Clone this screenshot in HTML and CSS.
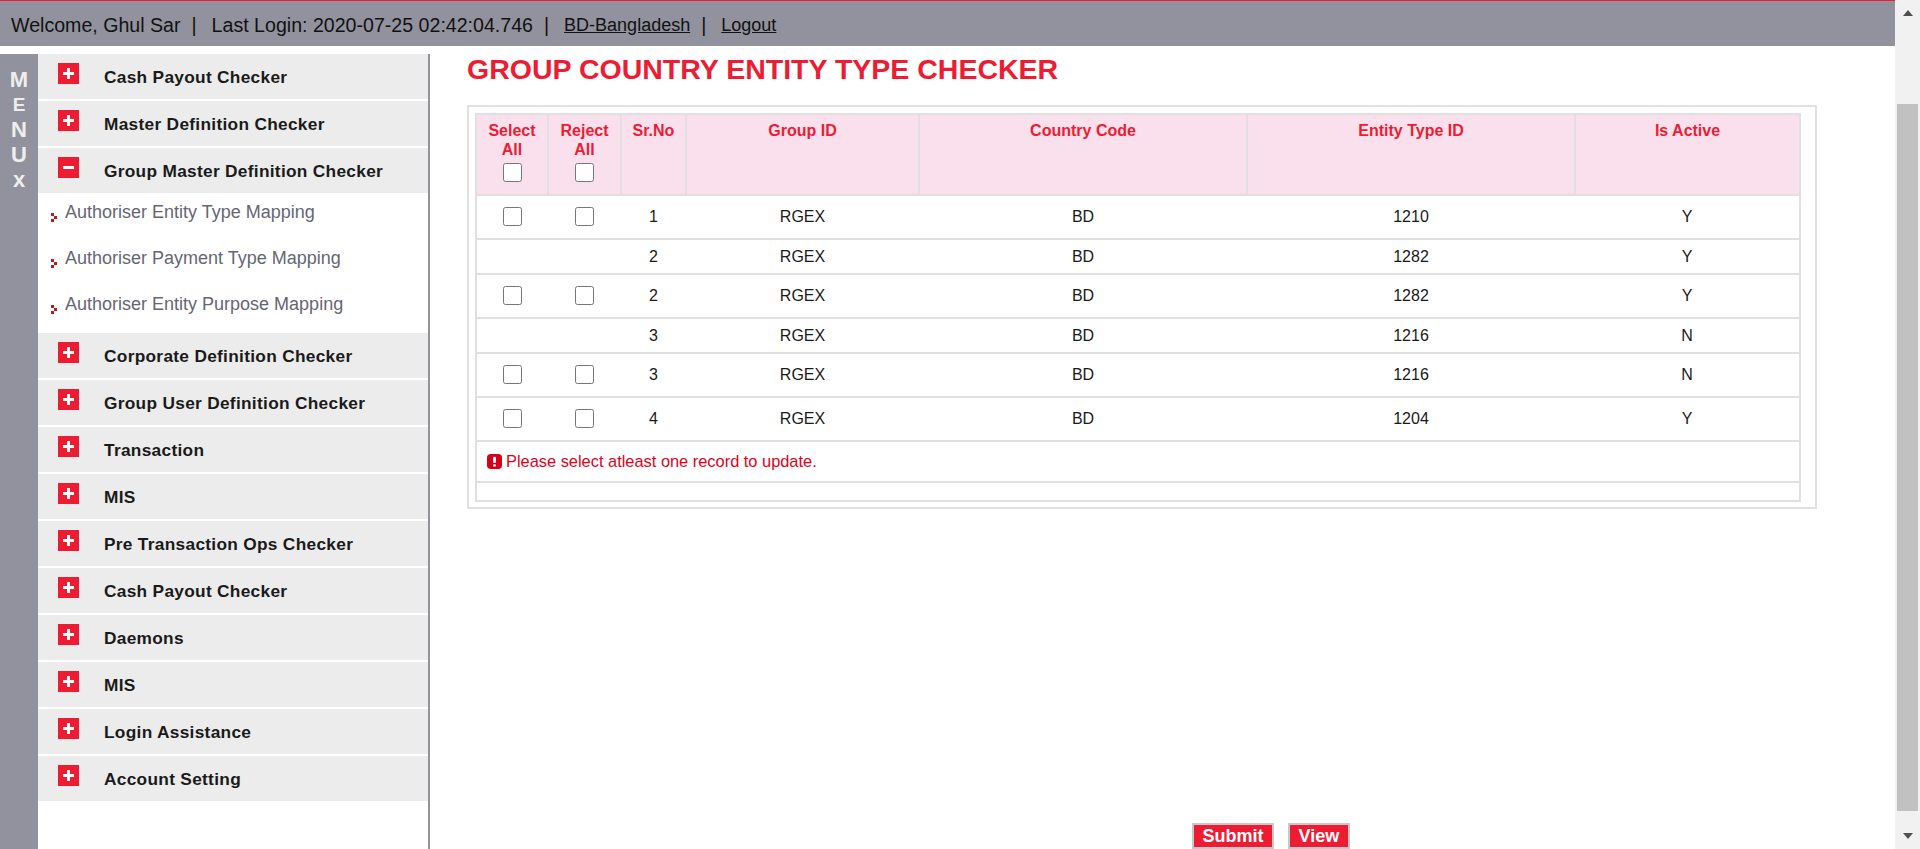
FILE: index.html
```html
<!DOCTYPE html>
<html lang="en">
<head>
    <meta charset="UTF-8">
    <meta name="viewport" content="width=device-width, initial-scale=1.0">
    <title>Group Country Entity Type Checker</title>
    <link rel="stylesheet" href="styles.css">
</head>
<body>
    <div class="page">
        <div class="page-main">
            <header class="topbar">
                <span>Welcome, Ghul Sar</span>
                <span class="sep">|</span>
                <span>Last Login: 2020-07-25 02:42:04.746</span>
                <span class="sep">|</span>
                <a href="#">BD-Bangladesh</a>
                <span class="sep">|</span>
                <a href="#">Logout</a>
            </header>

            <div class="layout">
                <aside class="sidebar">
                    <div class="menu-strip">
                        <span>M</span>
                        <span class="small">E</span>
                        <span>N</span>
                        <span>U</span>
                        <span>x</span>
                    </div>
                    <ul class="menu">
                        <li class="menu-item"><span class="toggle"></span>Cash Payout Checker</li>
                        <li class="menu-item"><span class="toggle"></span>Master Definition Checker</li>
                        <li class="menu-item"><span class="toggle minus"></span>Group Master Definition Checker</li>
                        <li class="submenu">
                            <a href="#"><svg class="bullet" viewBox="0 0 6 9"><path d="M0 0h3v3H0zM3 3h3v3H3zM0 6h3v3H0z" fill="#c3161c"/></svg>Authoriser Entity Type Mapping</a>
                            <a href="#"><svg class="bullet" viewBox="0 0 6 9"><path d="M0 0h3v3H0zM3 3h3v3H3zM0 6h3v3H0z" fill="#c3161c"/></svg>Authoriser Payment Type Mapping</a>
                            <a href="#"><svg class="bullet" viewBox="0 0 6 9"><path d="M0 0h3v3H0zM3 3h3v3H3zM0 6h3v3H0z" fill="#c3161c"/></svg>Authoriser Entity Purpose Mapping</a>
                        </li>
                        <li class="menu-item"><span class="toggle"></span>Corporate Definition Checker</li>
                        <li class="menu-item"><span class="toggle"></span>Group User Definition Checker</li>
                        <li class="menu-item"><span class="toggle"></span>Transaction</li>
                        <li class="menu-item"><span class="toggle"></span>MIS</li>
                        <li class="menu-item"><span class="toggle"></span>Pre Transaction Ops Checker</li>
                        <li class="menu-item"><span class="toggle"></span>Cash Payout Checker</li>
                        <li class="menu-item"><span class="toggle"></span>Daemons</li>
                        <li class="menu-item"><span class="toggle"></span>MIS</li>
                        <li class="menu-item"><span class="toggle"></span>Login Assistance</li>
                        <li class="menu-item"><span class="toggle"></span>Account Setting</li>
                    </ul>
                </aside>

                <main class="content">
                    <h1>GROUP COUNTRY ENTITY TYPE CHECKER</h1>
                    <div class="table-box">
                        <table class="grid">
                            <thead>
                                <tr>
                                    <th class="col-check">Select All<input type="checkbox"></th>
                                    <th class="col-check2">Reject All<input type="checkbox"></th>
                                    <th class="col-sr">Sr.No</th>
                                    <th class="col-group">Group ID</th>
                                    <th class="col-country">Country Code</th>
                                    <th class="col-entity">Entity Type ID</th>
                                    <th>Is Active</th>
                                </tr>
                            </thead>
                            <tbody>
                                <tr class="row-tall">
                                    <td><input type="checkbox"></td><td><input type="checkbox"></td>
                                    <td>1</td><td>RGEX</td><td>BD</td><td>1210</td><td>Y</td>
                                </tr>
                                <tr class="row-short">
                                    <td></td><td></td>
                                    <td>2</td><td>RGEX</td><td>BD</td><td>1282</td><td>Y</td>
                                </tr>
                                <tr class="row-tall">
                                    <td><input type="checkbox"></td><td><input type="checkbox"></td>
                                    <td>2</td><td>RGEX</td><td>BD</td><td>1282</td><td>Y</td>
                                </tr>
                                <tr class="row-short">
                                    <td></td><td></td>
                                    <td>3</td><td>RGEX</td><td>BD</td><td>1216</td><td>N</td>
                                </tr>
                                <tr class="row-tall">
                                    <td><input type="checkbox"></td><td><input type="checkbox"></td>
                                    <td>3</td><td>RGEX</td><td>BD</td><td>1216</td><td>N</td>
                                </tr>
                                <tr class="row-tall">
                                    <td><input type="checkbox"></td><td><input type="checkbox"></td>
                                    <td>4</td><td>RGEX</td><td>BD</td><td>1204</td><td>Y</td>
                                </tr>
                                <tr class="row-message">
                                    <td colspan="7">
                                        <div class="error-msg">
                                            <svg class="error-icon" viewBox="0 0 16 16"><rect width="16" height="16" rx="4" fill="#d5001c"/><rect x="6.5" y="3" width="3" height="6.5" rx="1" fill="#fff"/><rect x="6.5" y="10.8" width="3" height="2.6" rx="1" fill="#fff"/></svg>
                                            Please select atleast one record to update.
                                        </div>
                                    </td>
                                </tr>
                                <tr class="row-empty"><td colspan="7"></td></tr>
                            </tbody>
                        </table>
                    </div>
                    <div class="actions">
                        <button>Submit</button>
                        <button>View</button>
                    </div>
                </main>
            </div>
        </div>

        <div class="scrollbar">
            <span class="arrow-up"></span>
            <div class="track"><div class="thumb"></div></div>
            <span class="arrow-down"></span>
        </div>
    </div>
</body>
</html>
```

FILE: styles.css
```css
* {
    box-sizing: border-box;
}
html, body {
    height: 100%;
    margin: 0;
    padding: 0;
    overflow: hidden;
}
body {
    font-family: "Liberation Sans", Arial, sans-serif;
    font-size: 16px;
    color: #1a1a1a;
    background-color: #fff;
}
.page {
    display: flex;
    height: 100%;
}
.page-main {
    flex: 1;
    min-width: 0;
    display: flex;
    flex-direction: column;
}

/* top bar */
.topbar {
    height: 46px;
    flex-shrink: 0;
    border-top: 1px solid #ed1c33;
    background-color: #92929e;
    padding: 3px 0 0 11px;
    display: flex;
    align-items: center;
    font-size: 19.6px;
    color: #111;
}
.topbar a {
    color: #111;
    font-size: 18px;
}
.topbar .sep {
    margin: 0 15px 0 11px;
}

.layout {
    flex: 1;
    min-height: 0;
    display: flex;
    margin-top: 8px;
}

/* sidebar */
.sidebar {
    width: 430px;
    flex-shrink: 0;
    display: flex;
    border-right: 2px solid #92929e;
}
.menu-strip {
    width: 38px;
    flex-shrink: 0;
    background-color: #92929e;
    padding-top: 13px;
    display: flex;
    flex-direction: column;
    align-items: center;
    font-size: 22px;
    font-weight: bold;
    line-height: 25px;
    color: #eee;
}
.menu-strip .small {
    font-size: 19px;
}
.menu {
    flex: 1;
    list-style: none;
    margin: 0;
    padding: 0;
}
.menu-item {
    height: 45px;
    margin-bottom: 2px;
    padding: 9px 0 0 20px;
    background-color: #ececec;
    display: flex;
    font-size: 17.3px;
    font-weight: bold;
    letter-spacing: 0.3px;
    line-height: 28px;
}
.menu-item:has(+ .submenu) {
    margin-bottom: 0;
}
.toggle {
    width: 21px;
    height: 21px;
    margin-right: 25px;
    background-color: #ed1c33;
    position: relative;
}
.toggle::before {
    content: "";
    position: absolute;
    left: 5px;
    top: 9px;
    width: 11px;
    height: 3px;
    background-color: #fff;
}
.toggle::after {
    content: "";
    position: absolute;
    left: 9px;
    top: 5px;
    width: 3px;
    height: 11px;
    background-color: #fff;
}
.toggle.minus::after {
    display: none;
}
.submenu {
    height: 140px;
    padding: 0 0 0 13px;
}
.submenu a {
    height: 46px;
    display: flex;
    align-items: center;
    color: #666673;
    font-size: 18px;
    text-decoration: none;
    padding-bottom: 7px;
}
.bullet {
    width: 6px;
    height: 9px;
    margin: 9px 8px 0 0;
}

/* main content */
.content {
    flex: 1;
    min-width: 0;
    display: flex;
    flex-direction: column;
    padding-left: 37px;
}
h1 {
    margin: 0;
    font-size: 28.5px;
    line-height: 30px;
    color: #ed1c33;
}
.table-box {
    width: 1350px;
    margin-top: 21px;
    padding: 6px 14px 5px 6px;
    border: 2px solid #e0e0e0;
}
.grid {
    width: 1326px;
    border-collapse: collapse;
    table-layout: fixed;
}
.grid th,
.grid td {
    border: 2px solid #e0e0e0;
    text-align: center;
    padding: 0;
}
.grid th {
    height: 81px;
    padding-top: 6px;
    vertical-align: top;
    background-color: #fae0ed;
    color: #ed1c33;
    font-size: 16px;
    line-height: 19px;
}
.grid th input {
    display: block;
    margin: 4px auto 0;
}
.grid input {
    width: 19px;
    height: 19px;
    margin: 0 0 2px;
    vertical-align: middle;
}
.grid tbody td {
    border-left: none;
    border-right: none;
}
.grid tbody tr td:first-child {
    border-left: 2px solid #e0e0e0;
}
.grid tbody tr td:last-child {
    border-right: 2px solid #e0e0e0;
}
.col-check { width: 72px; }
.col-check2 { width: 73px; }
.col-sr { width: 65px; }
.col-group { width: 233px; }
.col-country { width: 328px; }
.col-entity { width: 328px; }
.row-tall { height: 44px; }
.row-short { height: 35px; }
.row-message { height: 41px; }
.row-empty { height: 19px; }
.error-msg {
    display: flex;
    align-items: center;
    gap: 4px;
    padding-left: 10px;
    color: #e2001a;
    font-size: 16.4px;
    text-align: left;
}
.error-icon {
    width: 15px;
    height: 15px;
}
.actions {
    margin-top: auto;
    margin-left: 725px;
    display: flex;
    gap: 14px;
}
.actions button {
    height: 26px;
    padding: 0 8.5px;
    background-color: #ed1c33;
    border: 2px solid #c8c8c8;
    color: #fff;
    font-family: inherit;
    font-size: 18px;
    font-weight: bold;
}

/* page scrollbar */
.scrollbar {
    width: 25px;
    flex-shrink: 0;
    background-color: #f1f1f1;
    display: flex;
    flex-direction: column;
    align-items: center;
}
.arrow-up,
.arrow-down {
    width: 0;
    height: 0;
    border-left: 5.5px solid transparent;
    border-right: 5.5px solid transparent;
    margin: 10px 0;
}
.arrow-up {
    border-bottom: 6px solid #505050;
}
.arrow-down {
    border-top: 6px solid #505050;
}
.track {
    flex: 1;
    width: 100%;
    padding: 78px 2px 12px;
}
.thumb {
    height: 100%;
    background-color: #c1c1c1;
}
```
